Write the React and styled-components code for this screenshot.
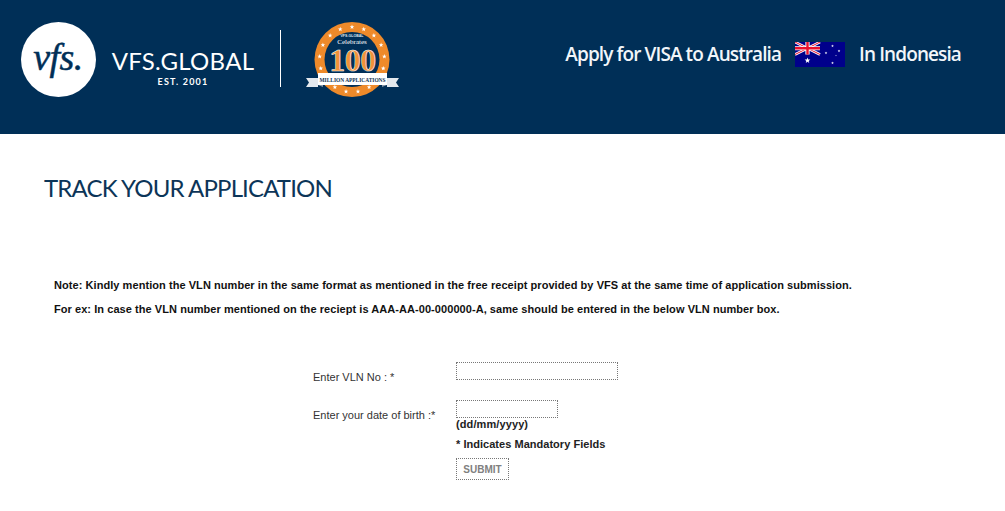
import React from 'react';
import styled, { createGlobalStyle } from 'styled-components';

const GlobalStyle = createGlobalStyle`
  html, body {
    margin: 0;
    padding: 0;
    background: #fff;
    font-family: "Liberation Sans", Arial, sans-serif;
  }
`;

const Header = styled.header`
  height: 134px;
  box-sizing: border-box;
  background: #002f57;
  display: flex;
  align-items: flex-start;
  padding: 22px 44px 0 21px;
`;

const Brand = styled.div`
  display: flex;
  align-items: flex-start;
`;

const Wordmark = styled.div`
  margin: 25px 0 0 16px;
  width: 142px;
  color: #fff;
  display: flex;
  flex-direction: column;
  align-items: center;
`;

const WordmarkName = styled.span`
  font-family: "Lato", sans-serif;
  font-size: 24px;
  line-height: 28px;
  letter-spacing: 0.3px;
  white-space: nowrap;
`;

const WordmarkEst = styled.span`
  font-family: "Lato", sans-serif;
  font-weight: 700;
  font-size: 9px;
  line-height: 11px;
  letter-spacing: 1.2px;
  margin-top: 1px;
  white-space: nowrap;
`;

const Divider = styled.span`
  width: 1px;
  height: 57px;
  background: #fff;
  margin: 8px 25px 0 26px;
`;

const Tagline = styled.div`
  margin-left: auto;
  margin-top: 20px;
  height: 25px;
  display: flex;
  align-items: center;
  color: #f2f6fa;
  font-family: "Open Sans", sans-serif;
  font-size: 19px;
  font-weight: 600;
  letter-spacing: -0.9px;
  white-space: nowrap;
`;

const TaglineText = styled.span`
  margin-top: -2px;
`;

const FlagWrap = styled.span`
  display: flex;
  margin: 0 14px;
`;

const Main = styled.main`
  padding: 38px 0 0 44px;
`;

const Title = styled.h1`
  margin: 0;
  font-family: "Lato", sans-serif;
  font-weight: 400;
  font-size: 24px;
  line-height: 32px;
  letter-spacing: -0.85px;
  color: #0c3558;
`;

const Notes = styled.div`
  margin: 74px 0 0 10px;
`;

const Note = styled.p`
  margin: 0 0 10px;
  font-size: 11px;
  font-weight: 700;
  line-height: 14px;
  letter-spacing: 0.06px;
  color: #111;
`;

const Form = styled.form`
  margin: 46px 0 0 269px;
  display: grid;
  grid-template-columns: 143px 1fr;
  row-gap: 16px;
`;

const Label = styled.label`
  font-size: 11px;
  line-height: 14px;
  color: #333;
  padding-top: 8px;
`;

const Field = styled.div`
  display: flex;
  flex-direction: column;
  align-items: flex-start;
`;

const Input = styled.input`
  box-sizing: border-box;
  display: block;
  width: ${(props) => props.$width};
  height: 18px;
  padding: 0 3px;
  background: #fff;
  border: 1px dotted #777;
  outline: none;
`;

const Hint = styled.span`
  font-size: 11px;
  font-weight: 700;
  line-height: 13px;
  letter-spacing: 0.1px;
  color: #222;
`;

const Mandatory = styled.span`
  margin-top: 6px;
  font-size: 11px;
  font-weight: 700;
  line-height: 14px;
  letter-spacing: 0.03px;
  color: #222;
`;

const Submit = styled.button`
  margin-top: 7px;
  box-sizing: border-box;
  width: 53px;
  height: 22px;
  padding: 0;
  background: #fff;
  border: 1px dotted #777;
  font-family: "Liberation Sans", Arial, sans-serif;
  font-size: 10px;
  font-weight: 700;
  color: #808080;
`;

function VfsMark() {
  return (
    <svg width="75" height="75" viewBox="0 0 75 75">
      <circle cx="37.5" cy="37.5" r="37.5" fill="#fff" />
      <text
        x="37"
        y="48"
        textAnchor="middle"
        fontFamily="Liberation Serif, serif"
        fontStyle="italic"
        fontSize="38"
        letterSpacing="-0.5"
        fill="#002f57"
        stroke="#002f57"
        strokeWidth="0.5"
      >
        vfs.
      </text>
    </svg>
  );
}

const starAngles = Array.from({ length: 17 }, (_, i) => (i * 360) / 17);

function Star({ x, y, r = 2.4, fill = '#fff' }) {
  const points = [];
  for (let i = 0; i < 10; i++) {
    const rad = i % 2 ? r * 0.42 : r;
    const a = (Math.PI * i) / 5 - Math.PI / 2;
    points.push(`${x + rad * Math.cos(a)},${y + rad * Math.sin(a)}`);
  }
  return <polygon points={points.join(' ')} fill={fill} />;
}

function Badge() {
  return (
    <svg width="93" height="75" viewBox="0 0 93 75">
      <circle cx="46" cy="37.5" r="37.5" fill="#ee8a2a" />
      <circle cx="46" cy="37.5" r="27.5" fill="#002f57" />
      {starAngles.map((deg) => {
        const a = (deg * Math.PI) / 180;
        return <Star key={deg} x={46 + 32.5 * Math.sin(a)} y={37.5 - 32.5 * Math.cos(a)} />;
      })}
      <text x="46" y="14.5" textAnchor="middle" fontFamily="Liberation Sans, sans-serif" fontSize="3.6" fontWeight="700" fill="#dfe6ee">
        VFS.GLOBAL
      </text>
      <text x="46" y="21.5" textAnchor="middle" fontFamily="Liberation Serif, serif" fontSize="7" fill="#fff">
        Celebrates
      </text>
      <text
        x="46.5"
        y="49"
        textAnchor="middle"
        fontFamily="Liberation Serif, serif"
        fontWeight="700"
        fontSize="32"
        letterSpacing="-0.5"
        fill="#f0923a"
        stroke="#fff"
        strokeWidth="0.5"
      >
        100
      </text>
      <path d="M0 56h12v9H0l3-4.5z" fill="#e4e9ee" />
      <path d="M93 56H81v9h12l-3-4.5z" fill="#e4e9ee" />
      <path d="M12 51h69v12H12z" fill="#fff" />
      <path d="M12 63l5 2v-2zM81 63l-5 2v-2z" fill="#8b99a8" />
      <text
        x="46.5"
        y="59.5"
        textAnchor="middle"
        textLength="66"
        lengthAdjust="spacingAndGlyphs"
        fontFamily="Liberation Serif, serif"
        fontWeight="700"
        fontSize="6"
        fill="#0c2f52"
      >
        MILLION APPLICATIONS
      </text>
    </svg>
  );
}

function AustraliaFlag() {
  return (
    <svg width="50" height="25" viewBox="0 0 50 25">
      <rect width="50" height="25" fill="#00008b" />
      <path d="M0 0l25 12.5M25 0L0 12.5" stroke="#fff" strokeWidth="2.6" />
      <path d="M0 0l25 12.5M25 0L0 12.5" stroke="#e8112d" strokeWidth="1" />
      <path d="M12.5 0v12.5M0 6.25h25" stroke="#fff" strokeWidth="4.2" />
      <path d="M12.5 0v12.5M0 6.25h25" stroke="#e8112d" strokeWidth="2.4" />
      <Star x={12.5} y={18.5} r={3} />
      <Star x={37.5} y={4} r={1.4} />
      <Star x={37.5} y={21} r={1.4} />
      <Star x={31} y={11} r={1.4} />
      <Star x={44} y={9} r={1.4} />
      <Star x={41} y={13.5} r={0.8} />
    </svg>
  );
}

export default function App() {
  return (
    <>
      <GlobalStyle />
      <Header>
        <Brand>
          <VfsMark />
          <Wordmark>
            <WordmarkName>VFS.GLOBAL</WordmarkName>
            <WordmarkEst>EST. 2001</WordmarkEst>
          </Wordmark>
          <Divider />
          <Badge />
        </Brand>
        <Tagline>
          <TaglineText>Apply for VISA to Australia</TaglineText>
          <FlagWrap>
            <AustraliaFlag />
          </FlagWrap>
          <TaglineText>In Indonesia</TaglineText>
        </Tagline>
      </Header>
      <Main>
        <Title>TRACK YOUR APPLICATION</Title>
        <Notes>
          <Note>
            Note: Kindly mention the VLN number in the same format as mentioned in the free receipt provided by VFS at the same time of application submission.
          </Note>
          <Note>
            For ex: In case the VLN number mentioned on the reciept is AAA-AA-00-000000-A, same should be entered in the below VLN number box.
          </Note>
        </Notes>
        <Form onSubmit={(e) => e.preventDefault()}>
          <Label>Enter VLN No : *</Label>
          <Field>
            <Input $width="162px" />
          </Field>
          <Label>Enter your date of birth :*</Label>
          <Field>
            <Input $width="102px" />
            <Hint>(dd/mm/yyyy)</Hint>
            <Mandatory>* Indicates Mandatory Fields</Mandatory>
            <Submit type="submit">SUBMIT</Submit>
          </Field>
        </Form>
      </Main>
    </>
  );
}
